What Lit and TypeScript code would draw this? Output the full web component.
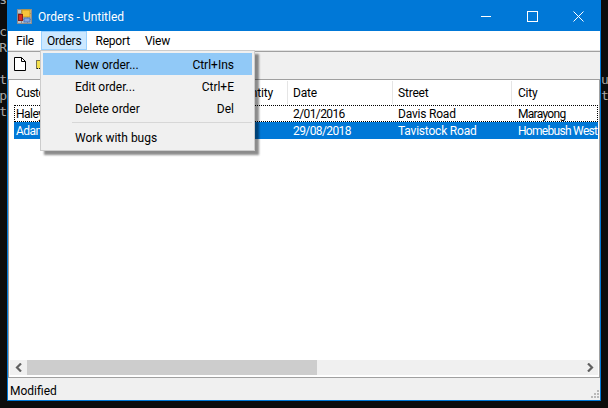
import { LitElement, html, css, svg } from "lit";
import { customElement } from "lit/decorators.js";

const leftLines = ["s", "", "c", "R", "", "t", "p", "t"];
const rightLines = ["", "", "", "", "", "ur", "tM"];
const menuTabs = ["File", "Orders", "Report", "View"];
const columns = ["Customer", "Quantity", "Date", "Street", "City"];
const rows = [
  ["Haley", "", "2/01/2016", "Davis Road", "Marayong"],
  ["Adam", "", "29/08/2018", "Tavistock Road", "Homebush West"],
];
const grip = [
  [6, 0],
  [3, 3],
  [6, 3],
  [0, 6],
  [3, 6],
  [6, 6],
];

@customElement("app-root")
export class AppRoot extends LitElement {
  static styles = css`
    :host {
      display: flex;
      width: 608px;
      height: 408px;
      overflow: hidden;
      background: #0c0c0c;
      font-family: Roboto, "Open Sans", sans-serif;
      font-size: 12px;
      color: #000;
    }
    .gutter {
      width: 7px;
      flex: none;
      overflow: hidden;
      color: #a8a8a8;
      font-family: "DejaVu Sans Mono", monospace;
      font-size: 13px;
      line-height: 16px;
    }
    .gutter > div:first-child {
      margin-top: -8px;
    }
    .gutter.left div {
      display: flex;
      justify-content: flex-end;
      height: 16px;
    }
    .gutter.right div {
      height: 16px;
      white-space: nowrap;
    }
    .window {
      position: relative;
      box-sizing: border-box;
      width: 594px;
      height: 401px;
      flex: none;
      display: flex;
      flex-direction: column;
      border: 1px solid #0078d7;
      background: #f0f0f0;
    }
    .title {
      height: 30px;
      flex: none;
      display: flex;
      align-items: center;
      background: #0078d7;
      color: #fff;
      padding-left: 10px;
      margin-left: -1px;
      margin-right: -1px;
    }
    .title .name {
      margin-left: 6px;
      padding-top: 1px;
    }
    .controls {
      margin-left: auto;
      display: flex;
    }
    .controls button {
      all: unset;
      width: 46px;
      height: 30px;
      display: flex;
      align-items: center;
      justify-content: center;
    }
    .menubar {
      height: 19px;
      flex: none;
      display: flex;
      align-items: center;
      background: #fff;
      padding-left: 2px;
    }
    .tab {
      box-sizing: border-box;
      height: 19px;
      padding: 1px 5px 0;
      margin-right: 1px;
      display: flex;
      align-items: center;
      border: 1px solid transparent;
      letter-spacing: -0.2px;
    }
    .tab:last-child {
      margin-left: 2px;
    }
    .tab.open {
      margin-right: 2px;
      background: #cce8ff;
      border-color: #99d1ff;
    }
    .toolbar {
      flex: none;
      display: flex;
      align-items: center;
      gap: 10px;
      padding-left: 6px;
      padding-bottom: 2px;
      height: 26px;
      border-top: 1px solid #e3e3e3;
      border-bottom: 1px solid #a0a0a0;
      box-shadow: inset 0 1px 0 #a0a0a0;
    }
    .list {
      flex: 1;
      min-height: 0;
      display: flex;
      flex-direction: column;
      background: #fff;
      border-left: 1px solid #a0a0a0;
      border-right: 1px solid #a0a0a0;
      border-bottom: 1px solid #a0a0a0;
      padding: 0 1px 2px;
    }
    .table {
      flex: 1;
      min-height: 0;
      padding-left: 4px;
    }
    .line {
      display: grid;
      grid-template-columns: 210px 63px 105px 119px 87px;
      width: 584px;
      white-space: nowrap;
      letter-spacing: -0.2px;
    }
    .line > div {
      overflow: hidden;
      padding-left: 6px;
    }
    .line > div:first-child {
      padding-left: 2px;
      letter-spacing: -0.5px;
    }
    .line > div:last-child {
      padding-left: 7px;
    }
    .row > div:nth-child(3) {
      letter-spacing: -0.6px;
    }
    .row > div:last-child {
      letter-spacing: -0.7px;
    }
    .head {
      height: 25px;
      align-items: center;
    }
    .head > div {
      height: 23px;
      line-height: 25px;
      padding-left: 5px;
      border-left: 1px solid #e5e5e5;
    }
    .head > div:first-child {
      border-left: none;
    }
    .head > div:last-child {
      padding-left: 6px;
    }
    .row {
      height: 17px;
      line-height: 18px;
    }
    .row.focused {
      outline: 1px dotted #000;
      outline-offset: -1px;
    }
    .row.selected {
      background: #0078d7;
      color: #fff;
    }
    .hscroll {
      height: 15px;
      flex: none;
      display: flex;
      background: #f0f0f0;
    }
    .arrow {
      width: 17px;
      flex: none;
      display: flex;
      align-items: center;
      justify-content: center;
    }
    .thumb {
      width: 290px;
      background: #cdcdcd;
    }
    .arrow.end {
      margin-left: auto;
    }
    .status {
      height: 22px;
      flex: none;
      display: flex;
      align-items: center;
      justify-content: space-between;
      padding: 0 1px 0 2px;
    }
    .status span {
      padding-top: 3px;
    }
    .status svg {
      align-self: flex-end;
      margin-bottom: 2px;
    }
    .menu {
      position: absolute;
      left: 32px;
      top: 49px;
      box-sizing: border-box;
      width: 215px;
      padding: 2px;
      background: #f0f0f0;
      border: 1px solid #cccccc;
      box-shadow: 4px 4px 2px rgba(0, 0, 0, 0.45);
    }
    .item {
      box-sizing: border-box;
      height: 22px;
      display: flex;
      align-items: center;
      justify-content: space-between;
      padding: 1px 18px 0 32px;
    }
    .item.hot {
      background: #91c9f7;
    }
    .sep {
      height: 1px;
      margin: 3px 0 3px 29px;
      background: #d7d7d7;
    }
  `;

  private chevron(points: string) {
    return html`<svg width="8" height="9" viewBox="0 0 8 9">
      <polyline points=${points} fill="none" stroke="#606060" stroke-width="2.2"></polyline>
    </svg>`;
  }

  private appIcon() {
    return html`<svg width="15" height="15" viewBox="0 0 15 15">
      <rect x="0.5" y="0.5" width="14" height="14" fill="#b9c4cf" stroke="#8d8d8d"></rect>
      <path d="M0 4.5h15M0 10.5h15M4.5 0v15M10.5 0v15" stroke="#8d8d8d" fill="none"></path>
      <rect x="5" y="1" width="8" height="7" fill="#f6c43c" stroke="#c99a1e"></rect>
      <rect x="1.5" y="5.5" width="4" height="6" fill="#d92c20" stroke="#8c1c16"></rect>
      <rect x="7" y="9" width="6" height="4" fill="#7fa6e6" stroke="#4a74b8"></rect>
    </svg>`;
  }

  private newDocIcon() {
    return html`<svg width="12" height="14" viewBox="0 0 12 14">
      <path d="M0.5 0.5h7l4 4v9h-11z" fill="#fff" stroke="#000"></path>
      <path d="M7.5 0.5v4h4" fill="none" stroke="#000"></path>
    </svg>`;
  }

  private folderIcon() {
    return html`<svg width="15" height="10" viewBox="0 0 15 10">
      <path d="M0.5 9.5v-8h4l1 1h8v7z" fill="#f4e04d" stroke="#000" stroke-dasharray="1 1"></path>
    </svg>`;
  }

  render() {
    return html`
      <div class="gutter left">${leftLines.map((t) => html`<div>${t}</div>`)}</div>
      <div class="window">
        <div class="title">
          ${this.appIcon()}
          <span class="name">Orders - Untitled</span>
          <div class="controls">
            <button>
              <svg width="10" height="10" viewBox="0 0 10 10"><path d="M0 5.5h10" stroke="#fff"></path></svg>
            </button>
            <button>
              <svg width="11" height="11" viewBox="0 0 11 11"><rect x="0.5" y="0.5" width="10" height="10" fill="none" stroke="#fff"></rect></svg>
            </button>
            <button>
              <svg width="11" height="11" viewBox="0 0 11 11"><path d="M0.5 0.5l10 10M10.5 0.5l-10 10" fill="none" stroke="#fff"></path></svg>
            </button>
          </div>
        </div>
        <div class="menubar">
          ${menuTabs.map((t) => html`<div class="tab ${t === "Orders" ? "open" : ""}">${t}</div>`)}
        </div>
        <div class="toolbar">${this.newDocIcon()} ${this.folderIcon()}</div>
        <div class="list">
          <div class="table">
            <div class="line head">${columns.map((c) => html`<div>${c}</div>`)}</div>
            ${rows.map(
              (r, i) => html`<div class="line row ${i === 0 ? "focused" : "selected"}">
                ${r.map((c) => html`<div>${c}</div>`)}
              </div>`
            )}
          </div>
          <div class="hscroll">
            <div class="arrow">${this.chevron("6,0.5 2,4.5 6,8.5")}</div>
            <div class="thumb"></div>
            <div class="arrow end">${this.chevron("2,0.5 6,4.5 2,8.5")}</div>
          </div>
        </div>
        <div class="status">
          <span>Modified</span>
          <svg width="8" height="8" viewBox="0 0 8 8">
            ${grip.map(([x, y]) => svg`<rect x=${x} y=${y} width="2" height="2" fill="#b8b8b8"></rect>`)}
          </svg>
        </div>
        <div class="menu">
          <div class="item hot"><span>New order...</span><span>Ctrl+Ins</span></div>
          <div class="item"><span>Edit order...</span><span>Ctrl+E</span></div>
          <div class="item"><span>Delete order</span><span>Del</span></div>
          <div class="sep"></div>
          <div class="item"><span>Work with bugs</span></div>
        </div>
      </div>
      <div class="gutter right">${rightLines.map((t) => html`<div>${t}</div>`)}</div>
    `;
  }
}
